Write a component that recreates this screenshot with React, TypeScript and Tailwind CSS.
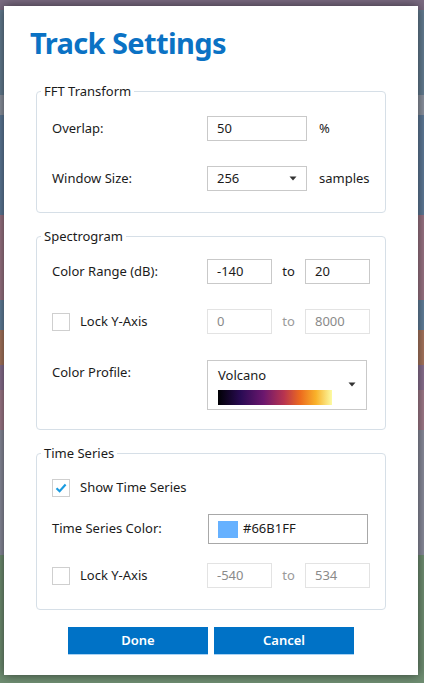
import type { ReactNode } from 'react';

const font = { fontFamily: '"Noto Sans", "Open Sans", "Liberation Sans", sans-serif' };

// blurred app bands showing behind the modal
const bands = [
  { h: 10, c: 'bg-[#7b6b82]' },
  { h: 85, c: 'bg-[#647d92]' },
  { h: 20, c: 'bg-[#8c93a0]' },
  { h: 100, c: 'bg-[#5e7a98]' },
  { h: 85, c: 'bg-[#9a7484]' },
  { h: 30, c: 'bg-[#62809c]' },
  { h: 35, c: 'bg-[#a8765e]' },
  { h: 25, c: 'bg-[#8a7090]' },
  { h: 40, c: 'bg-[#a07a8a]' },
  { h: 125, c: 'bg-[#8a8c9c]' },
  { h: 128, c: 'bg-[#6f8e72]' },
];

function TextBox({ value, disabled, className = '' }: { value: string; disabled?: boolean; className?: string }) {
  return (
    <div
      className={`flex h-[25px] items-center border px-[9px] text-[13px] ${
        disabled ? 'border-[#e3e3e3] text-[#8a8a8a]' : 'border-[#c9c9c9] text-[#1b1b1b]'
      } ${className}`}
    >
      {value}
    </div>
  );
}

function Arrow() {
  return (
    <svg width="8" height="5" viewBox="0 0 8 5" className="shrink-0">
      <path d="M0.5 0.5 H7.5 L4 4.5 Z" fill="#333" />
    </svg>
  );
}

function Checkbox({ checked }: { checked?: boolean }) {
  return (
    <div className="flex h-[18px] w-[18px] shrink-0 items-center justify-center border border-[#cfcfcf] bg-white">
      {checked && (
        <svg width="12" height="10" viewBox="0 0 12 10">
          <path d="M1.5 5.2 L4.6 8.2 L10.6 1.6" fill="none" stroke="#1a9be0" strokeWidth="2.2" />
        </svg>
      )}
    </div>
  );
}

function Group({ title, children, className = '' }: { title: string; children: ReactNode; className?: string }) {
  return (
    <fieldset className={`rounded-[4px] border border-[#d6dfe7] px-[4px] ${className}`}>
      <legend className="px-[3px] text-[13px] leading-[18px] text-[#1b1b1b]">{title}</legend>
      <div className="pl-[11px]">{children}</div>
    </fieldset>
  );
}

function Row({ label, children, className = '' }: { label: ReactNode; children: ReactNode; className?: string }) {
  return (
    <div className={`flex items-center ${className}`}>
      <div className="w-[155px] shrink-0 text-[13px] text-[#1b1b1b]">{label}</div>
      {children}
    </div>
  );
}

function RangeRow({ from, to, disabled }: { from: string; to: string; disabled?: boolean }) {
  return (
    <div className="flex items-center">
      <TextBox value={from} disabled={disabled} className="w-[65px]" />
      <span className={`w-[33px] text-center text-[13px] ${disabled ? 'text-[#9a9a9a]' : 'text-[#1b1b1b]'}`}>to</span>
      <TextBox value={to} disabled={disabled} className="w-[65px]" />
    </div>
  );
}

function LockLabel() {
  return (
    <div className="flex items-center gap-[10px]">
      <Checkbox />
      <span>Lock Y-Axis</span>
    </div>
  );
}

export default function App() {
  return (
    <div className="relative h-[683px] w-[424px] overflow-hidden" style={font}>
      <div className="flex flex-col">
        {bands.map((b, i) => (
          <div key={i} className={b.c} style={{ height: b.h }} />
        ))}
      </div>

      <div className="absolute left-[4px] top-[6px] flex h-[669px] w-[414px] flex-col bg-white px-[32px] shadow-[0_0_10px_rgba(0,0,0,0.55)]">
        <h1 className="-ml-[6px] mt-[17px] text-[29px] font-bold leading-[40px] tracking-[-0.6px] text-[#0b72c4]">
          Track Settings
        </h1>

        <Group title="FFT Transform" className="mt-[19px] pb-[21px]">
          <Row label="Overlap:" className="mt-[16px]">
            <TextBox value="50" className="w-[100px]" />
            <span className="ml-[12px] text-[13px] text-[#1b1b1b]">%</span>
          </Row>
          <Row label="Window Size:" className="mt-[25px]">
            <div className="flex h-[25px] w-[100px] items-center justify-between border border-[#c9c9c9] pl-[9px] pr-[9px] text-[13px] text-[#1b1b1b]">
              256
              <Arrow />
            </div>
            <span className="ml-[12px] text-[13px] text-[#1b1b1b]">samples</span>
          </Row>
        </Group>

        <Group title="Spectrogram" className="mt-[14px] pb-[19px]">
          <Row label="Color Range (dB):" className="mt-[14px]">
            <RangeRow from="-140" to="20" />
          </Row>
          <Row label={<LockLabel />} className="mt-[25px]">
            <RangeRow from="0" to="8000" disabled />
          </Row>
          <div className="mt-[26px] flex items-start">
            <div className="w-[155px] shrink-0 pt-[3px] text-[13px] text-[#1b1b1b]">Color Profile:</div>
            <div className="flex h-[50px] w-[160px] items-center justify-between border border-[#c9c9c9] pl-[10px] pr-[10px]">
              <div className="flex flex-col">
                <span className="text-[13px] leading-[18px] text-[#1b1b1b]">Volcano</span>
                <div className="mt-[6px] h-[15px] w-[114px] bg-[linear-gradient(90deg,#000004_0%,#2a0b54_20%,#6b176e_40%,#b8344f_58%,#ec6a1e_72%,#f9b22a_86%,#fcfba4_100%)]" />
              </div>
              <div className="-mt-[2px]">
                <Arrow />
              </div>
            </div>
          </div>
        </Group>

        <Group title="Time Series" className="mt-[14px] pb-[21px]">
          <div className="mt-[13px] flex h-[25px] items-center gap-[10px] text-[13px] text-[#1b1b1b]">
            <Checkbox checked />
            <span>Show Time Series</span>
          </div>
          <Row label="Time Series Color:" className="mt-[14px]">
            <div className="ml-[1px] flex h-[30px] w-[160px] items-center gap-[5px] border border-[#a8a8a8] pl-[9px] text-[13px] text-[#1b1b1b]">
              <div className="h-[17px] w-[20px] bg-[#66b1ff]" />
              #66B1FF
            </div>
          </Row>
          <Row label={<LockLabel />} className="mt-[19px]">
            <RangeRow from="-540" to="534" disabled />
          </Row>
        </Group>

        <div className="mt-[17px] flex justify-center gap-[6px]">
          {['Done', 'Cancel'].map((t) => (
            <button
              key={t}
              className="h-[28px] w-[140px] border-b border-[#a9d2f3] bg-[#0072c6] text-[13px] font-semibold text-white"
            >
              {t}
            </button>
          ))}
        </div>
      </div>
    </div>
  );
}
